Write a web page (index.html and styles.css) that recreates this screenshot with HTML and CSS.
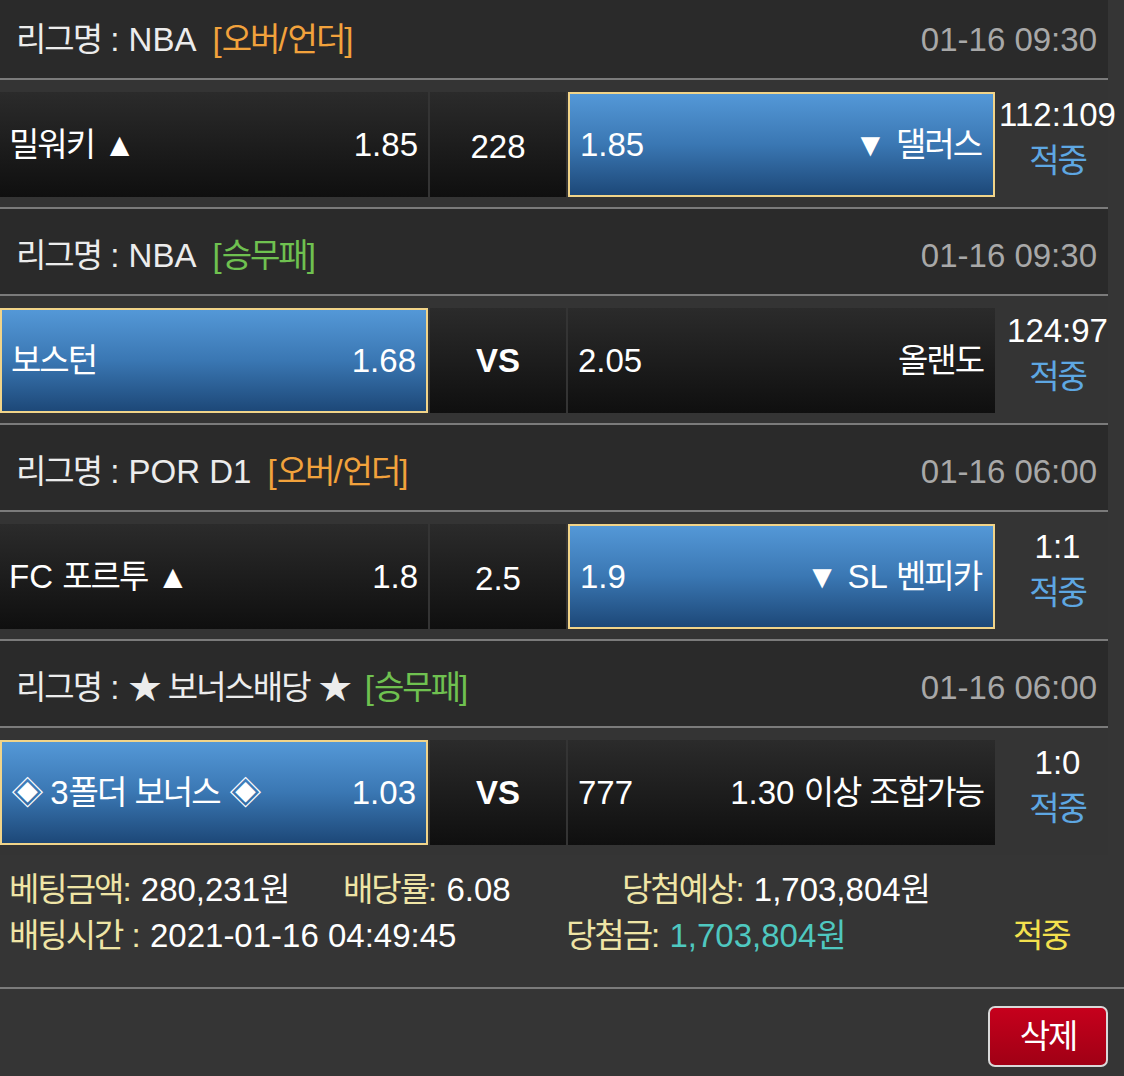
FILE: index.html
```html
<!DOCTYPE html>
<html lang="ko">
<head>
<meta charset="utf-8">
<title>배팅내역</title>
<link rel="stylesheet" href="styles.css">
</head>
<body>
<div class="slip">
  <div class="list">
    <section class="game">
      <div class="league">
        <span class="lname"><span class="ko">리그명</span> : NBA</span>
        <span class="tag ou">[<span class="ko">오버</span>/<span class="ko">언더</span>]</span>
        <span class="time">01-16 09:30</span>
      </div>
      <div class="match">
        <div class="cell home"><span><span class="ko">밀워키</span> ▲</span><span>1.85</span></div>
        <div class="cell mid">228</div>
        <div class="cell away on"><span>1.85</span><span>▼ <span class="ko">댈러스</span></span></div>
        <div class="score"><div>112:109</div><div class="res ko">적중</div></div>
      </div>
    </section>
    <section class="game">
      <div class="league">
        <span class="lname"><span class="ko">리그명</span> : NBA</span>
        <span class="tag wdl">[<span class="ko">승무패</span>]</span>
        <span class="time">01-16 09:30</span>
      </div>
      <div class="match">
        <div class="cell home on"><span class="ko">보스턴</span><span>1.68</span></div>
        <div class="cell mid vs">VS</div>
        <div class="cell away"><span>2.05</span><span class="ko">올랜도</span></div>
        <div class="score"><div>124:97</div><div class="res ko">적중</div></div>
      </div>
    </section>
    <section class="game">
      <div class="league">
        <span class="lname"><span class="ko">리그명</span> : POR D1</span>
        <span class="tag ou">[<span class="ko">오버</span>/<span class="ko">언더</span>]</span>
        <span class="time">01-16 06:00</span>
      </div>
      <div class="match">
        <div class="cell home"><span>FC <span class="ko">포르투</span> ▲</span><span>1.8</span></div>
        <div class="cell mid">2.5</div>
        <div class="cell away on"><span>1.9</span><span>▼ SL <span class="ko">벤피카</span></span></div>
        <div class="score"><div>1:1</div><div class="res ko">적중</div></div>
      </div>
    </section>
    <section class="game">
      <div class="league">
        <span class="lname"><span class="ko">리그명</span> : <span class="star">★</span> <span class="ko">보너스배당</span> <span class="star">★</span></span>
        <span class="tag wdl">[<span class="ko">승무패</span>]</span>
        <span class="time">01-16 06:00</span>
      </div>
      <div class="match last">
        <div class="cell home on"><span><span class="star">◈</span> 3<span class="ko">폴더</span> <span class="ko">보너스</span> <span class="star">◈</span></span><span>1.03</span></div>
        <div class="cell mid vs">VS</div>
        <div class="cell away"><span>777</span><span>1.30 <span class="ko">이상</span> <span class="ko">조합가능</span></span></div>
        <div class="score"><div>1:0</div><div class="res ko">적중</div></div>
      </div>
    </section>
  </div>

  <div class="summary">
    <div class="srow">
      <div class="item w1"><span class="lbl ko">베팅금액</span><span class="lbl">:</span> 280,231<span class="ko">원</span></div>
      <div class="item w2"><span class="lbl ko">배당률</span><span class="lbl">:</span> 6.08</div>
      <div class="item"><span class="lbl ko">당첨예상</span><span class="lbl">:</span> 1,703,804<span class="ko">원</span></div>
    </div>
    <div class="srow">
      <div class="item w3"><span class="lbl ko">배팅시간</span><span class="lbl"> :</span> 2021-01-16 04:49:45</div>
      <div class="item w4"><span class="lbl ko">당첨금</span><span class="lbl">:</span> <span class="won">1,703,804<span class="ko">원</span></span></div>
      <div class="item hit ko">적중</div>
    </div>
  </div>

  <div class="actions">
    <button class="del" type="button"><span class="ko">삭제</span></button>
  </div>
</div>
</body>
</html>
```

FILE: styles.css
```css
* { box-sizing: border-box; }

html, body {
  margin: 0;
  padding: 0;
  background: #353535;
}

body {
  color: #ffffff;
  font-family: "Liberation Sans", "Noto Sans CJK KR", sans-serif;
  font-size: 33px;
  line-height: 40px;
  overflow: hidden;
}

.ko { letter-spacing: -2px; }
.star { letter-spacing: -3px; }

.list {
  width: 1108px;
  margin-top: -7px;
}

.league {
  height: 87px;
  background: #2a2a2a;
  border-bottom: 2px solid #7b7b7b;
  display: flex;
  align-items: center;
  padding: 9px 11px 0 16px;
  white-space: nowrap;
}

.lname { color: #ececec; }

.tag { margin-left: 16px; }
.tag.ou { color: #f2a23c; }
.tag.wdl { color: #6fc150; }

.time {
  margin-left: auto;
  color: #a8a8a8;
}

.match {
  height: 129px;
  display: flex;
  gap: 2px;
  padding: 12px 0 10px;
  background: #343434;
  border-bottom: 2px solid #7b7b7b;
  white-space: nowrap;
}
.match.last { border-bottom: none; height: 127px; }

.cell {
  display: flex;
  align-items: center;
  justify-content: space-between;
  padding: 0 10px 0 9px;
  background: linear-gradient(#2b2b2b, #0f0f0f);
}

.cell.home { width: 428px; }
.cell.away { width: 427px; padding: 0 12px 0 10px; }
.cell.mid {
  flex: 1;
  justify-content: center;
  padding: 4px 0 0;
}
.cell.vs { font-weight: bold; padding-top: 0; }

.cell.on {
  background: linear-gradient(#5498d7, #3a77b3 50%, #1d4878);
  border: 2px solid #f1d489;
}

.score {
  width: 111px;
  padding-left: 10px;
  text-align: center;
  line-height: 46px;
  overflow: visible;
}
.score > div { margin: 0 -10px; }
.res { color: #5ea7e2; margin-top: 3px; }

.summary {
  padding: 12px 0 28px;
  border-bottom: 2px solid #7b7b7b;
  line-height: 46px;
  white-space: nowrap;
}

.srow {
  display: flex;
  padding-left: 9px;
}

.item.w1 { width: 334px; }
.item.w2 { width: 279px; }
.item.w3 { width: 557px; }
.item.w4 { width: 447px; }

.lbl { color: #efe5a6; }
.won { color: #4fc8c0; }
.hit { color: #f4e14e; }

.actions {
  display: flex;
  justify-content: flex-end;
  padding: 17px 16px 0 0;
}

.del {
  width: 120px;
  height: 61px;
  border: 2px solid #d9d9d9;
  border-radius: 7px;
  background: linear-gradient(#c6001c, #a00015);
  color: #ffffff;
  font-family: "Liberation Sans", "Noto Sans CJK KR", sans-serif;
  font-size: 33px;
  line-height: 40px;
  padding: 0;
  cursor: pointer;
}
```
